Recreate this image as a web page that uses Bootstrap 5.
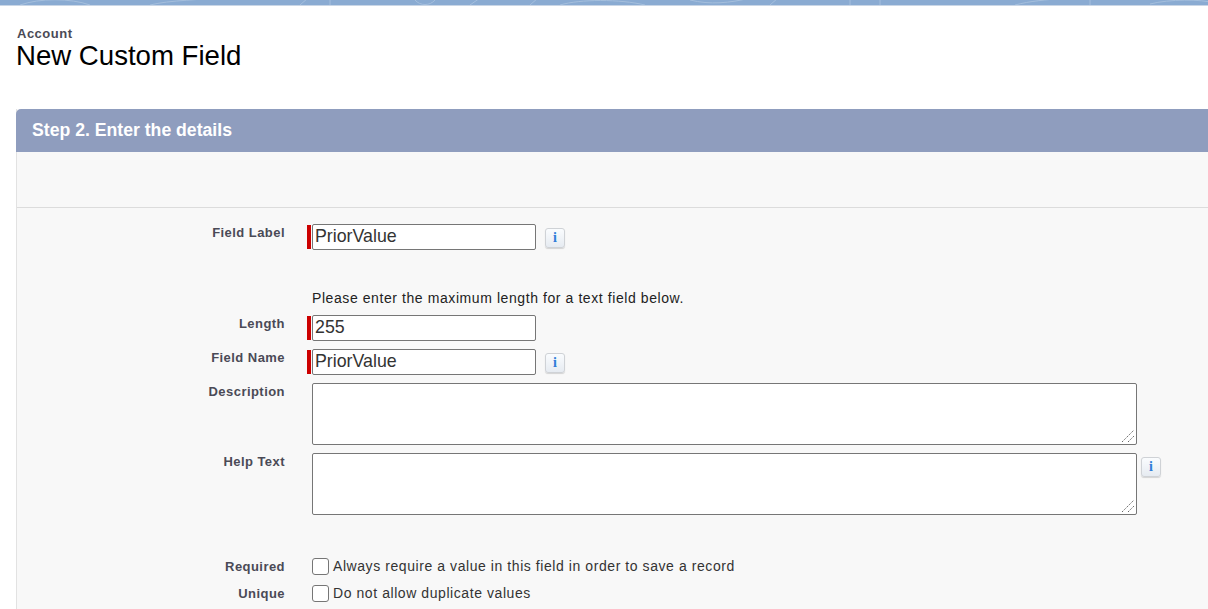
<!DOCTYPE html>
<html lang="en">
<head>
  <meta charset="UTF-8">
  <meta name="viewport" content="width=device-width, initial-scale=1.0">
  <title>New Custom Field</title>
  <link href="https://cdn.jsdelivr.net/npm/bootstrap@5.3.0/dist/css/bootstrap.min.css" rel="stylesheet">
  <style>
    body {
      font-family: "Liberation Sans", Arial, sans-serif;
      background: #fff;
      color: #16181d;
      overflow: hidden;
    }
    .top-band {
      height: 6px;
      background: #8aabd2;
      border-bottom: 1px solid #c9d6e6;
      overflow: hidden;
    }
    .top-band svg { display: block; }
    .page-head { padding: 21px 0 0 16px; height: 103px; }
    .page-type { font-size: 13px; letter-spacing: .5px; line-height: 14px; font-weight: 700; color: #4a4a56; padding-left: 1px; }
    .page-name { font-size: 27.6px; line-height: 30px; font-weight: 400; color: #000; margin: 0; }
    .step-panel { margin-left: 16px; background: #f8f8f8; border-left: 1px solid #e2e2e2; }
    .step-head {
      height: 43px;
      margin-left: -1px;
      padding-left: 16px;
      background: #8f9dbe;
      color: #fff;
      font-size: 17.65px;
      font-weight: 700;
      line-height: 42px;
      border-radius: 5px 0 0 0;
    }
    .step-gap { height: 56px; border-bottom: 1px solid #dcdcdc; }
    .step-body { padding-top: 16px; padding-bottom: 20px; }
    .field-row { display: flex; align-items: flex-start; }
    .field-name {
      width: 268px;
      flex: none;
      text-align: right;
      font-size: 13px;
      letter-spacing: .45px;
      line-height: 16px;
      font-weight: 700;
      color: #4a4a56;
      padding-top: 1px;
    }
    .field-main { margin-left: 27px; display: flex; align-items: flex-start; }
    .need-bar { width: 4px; height: 24px; margin-top: 1px; background: #cc0000; margin-left: -5px; margin-right: 1px; flex: none; }
    .text-in {
      width: 224px;
      height: 26px;
      padding: 0 2px 2px;
      font-family: inherit;
      font-size: 17.8px;
      color: #333;
      background: #fff;
      border: 1px solid #767676;
      border-radius: 2px;
      outline: none;
    }
    .area-wrap { display: block; position: relative; }
    .area-in {
      display: block;
      width: 825px;
      height: 62px;
      background: #fff;
      border: 1px solid #767676;
      border-radius: 2px;
      outline: none;
      resize: none;
    }
    .area-grip { position: absolute; right: 0; bottom: 0; pointer-events: none; }
    .info-tip {
      width: 20px;
      height: 20px;
      margin-left: 9px;
      margin-top: 4px;
      flex: none;
      text-align: center;
      font-family: "Liberation Serif", serif;
      font-size: 14px;
      font-weight: 700;
      line-height: 18px;
      color: #2f7ed8;
      background: linear-gradient(#fafcfe, #e6ebf1);
      border: 1px solid #cfd2d6;
      border-radius: 3px;
      box-shadow: 0 1px 1px rgba(0, 0, 0, .15);
    }
    .info-tip.tip-high { margin-left: 4px; }
    .hint-line { margin-left: 295px; font-size: 14px; letter-spacing: .58px; line-height: 16px; color: #222; }
    .tick-box {
      width: 17px;
      height: 17px;
      margin: 0 4px 0 0;
      flex: none;
      appearance: none;
      background: #fff;
      border: 1px solid #767676;
      border-radius: 3px;
    }
    .tick-text { font-size: 14px; letter-spacing: .57px; line-height: 17px; color: #333; }
    .gap-a { margin-top: 40px; }
    .gap-b { margin-top: 9px; }
    .gap-8 { margin-top: 8px; }
    .gap-c { margin-top: 43px; }
    .gap-d { margin-top: 10px; }
  </style>
</head>
<body>
  <div class="top-band">
    <svg width="1208" height="5" fill="none" stroke="#a5bfdd" stroke-width="1">
      <path d="M20 5C40 -2 70 -2 90 5M150 5C170 0 200 0 230 -3M300 5L308 -2M330 0V5M415 0C420 6 430 6 435 0M470 5L480 -2M530 5L538 -2M560 5C580 -1 620 -1 645 5M690 0C710 5 730 3 750 -2M770 5L778 -2M850 0V5M880 5V0M1015 5C1030 1 1045 0 1065 -2M1090 0V5M1150 4C1170 -1 1200 -1 1215 3"/>
    </svg>
  </div>

  <div class="page-head">
    <div class="page-type">Account</div>
    <h1 class="page-name">New Custom Field</h1>
  </div>

  <div class="step-panel">
    <div class="step-head">Step 2. Enter the details</div>
    <div class="step-gap"></div>
    <div class="step-body">
      <div class="field-row">
        <div class="field-name">Field Label</div>
        <div class="field-main">
          <span class="need-bar"></span>
          <input class="text-in" type="text" value="PriorValue">
          <span class="info-tip">i</span>
        </div>
      </div>

      <div class="hint-line gap-a">Please enter the maximum length for a text field below.</div>

      <div class="field-row gap-b">
        <div class="field-name">Length</div>
        <div class="field-main">
          <span class="need-bar"></span>
          <input class="text-in" type="text" value="255">
        </div>
      </div>

      <div class="field-row gap-8">
        <div class="field-name">Field Name</div>
        <div class="field-main">
          <span class="need-bar"></span>
          <input class="text-in" type="text" value="PriorValue">
          <span class="info-tip">i</span>
        </div>
      </div>

      <div class="field-row gap-8">
        <div class="field-name">Description</div>
        <div class="field-main">
          <span class="area-wrap">
            <textarea class="area-in"></textarea>
            <svg class="area-grip" width="16" height="16" stroke="#666" stroke-dasharray="1.4 1"><path d="M1 13L13 1M7 13L13 7"/></svg>
          </span>
        </div>
      </div>

      <div class="field-row gap-8">
        <div class="field-name">Help Text</div>
        <div class="field-main">
          <span class="area-wrap">
            <textarea class="area-in"></textarea>
            <svg class="area-grip" width="16" height="16" stroke="#666" stroke-dasharray="1.4 1"><path d="M1 13L13 1M7 13L13 7"/></svg>
          </span>
          <span class="info-tip tip-high">i</span>
        </div>
      </div>

      <div class="field-row gap-c">
        <div class="field-name">Required</div>
        <div class="field-main">
          <input class="tick-box" type="checkbox">
          <span class="tick-text">Always require a value in this field in order to save a record</span>
        </div>
      </div>

      <div class="field-row gap-d">
        <div class="field-name">Unique</div>
        <div class="field-main">
          <input class="tick-box" type="checkbox">
          <span class="tick-text">Do not allow duplicate values</span>
        </div>
      </div>
    </div>
  </div>

  <script src="https://cdn.jsdelivr.net/npm/bootstrap@5.3.0/dist/js/bootstrap.bundle.min.js"></script>
</body>
</html>
